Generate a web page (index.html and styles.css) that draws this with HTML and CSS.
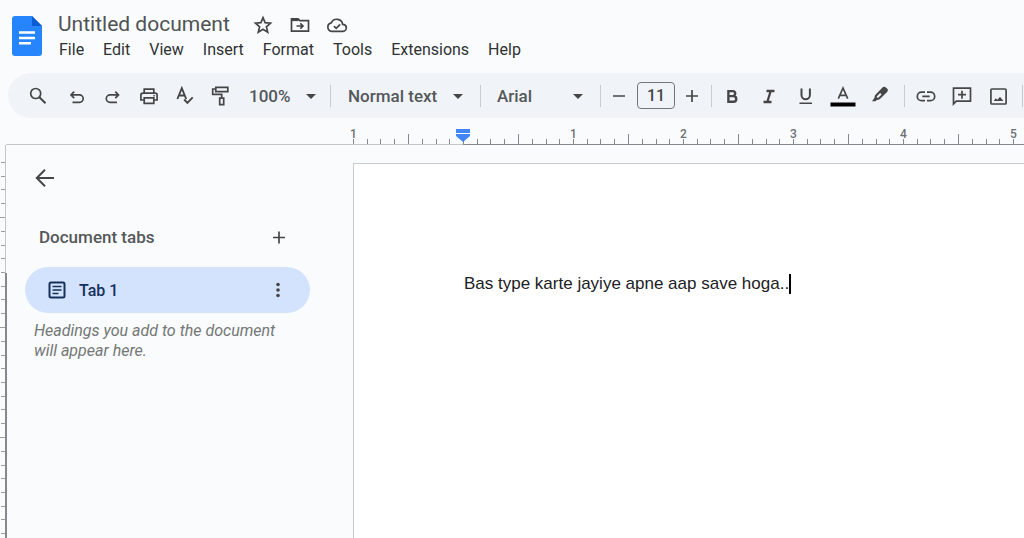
FILE: index.html
```html
<!DOCTYPE html>
<html lang="en">
<head>
<meta charset="utf-8">
<meta name="viewport" content="width=device-width, initial-scale=1">
<title>Untitled document</title>
<link rel="stylesheet" href="styles.css">
</head>
<body>
<header class="header">
  <a class="logo" href="#" aria-label="Docs home">
    <svg width="30" height="40" viewBox="0 0 30 40"><path fill="#2684fc" d="M3 0h17l10 10v27a3 3 0 0 1-3 3H3a3 3 0 0 1-3-3V3a3 3 0 0 1 3-3z"/><path fill="#0b5bd3" d="M20 0l10 10H20z"/><path stroke="#fff" stroke-width="2.400" d="M7 16.500h16M7 22h16M7 27.300h12"/></svg>
  </a>
  <div class="heading">
    <div class="title-row">
      <h1 class="title">Untitled document</h1>
      <div class="title-actions">
        <button class="icon-btn small" aria-label="Star"><svg width="20" height="20" viewBox="0 0 20 20" class="line"><path d="M10 2.700l2.100 5 5.400.5-4.100 3.600 1.300 5.300L10 14.200l-4.700 2.900 1.300-5.300-4.100-3.600 5.400-.5z"/></svg></button>
        <button class="icon-btn small" aria-label="Move"><svg width="20" height="20" viewBox="0 0 20 20" class="line"><path d="M1.500 4v12.200h17V5.700H9.800L8 3.800H1.500z"/><path d="M1.500 4.900h7" stroke-width="2.400"/><path d="M6.500 11h6M10.300 8.300l2.700 2.700-2.700 2.700"/></svg></button>
        <button class="icon-btn small" aria-label="Document status"><svg width="22" height="20" viewBox="0 0 22 20" class="line"><path d="M5.800 16.300a4.300 4.300 0 0 1-.5-8.500A6 6 0 0 1 16.700 9.300a3.500 3.500 0 0 1 .3 7z"/><path d="M7.900 11.200l2.300 2.200 4-4"/></svg></button>
      </div>
    </div>
    <nav class="menu" aria-label="Main menu">
      <button>File</button><button>Edit</button><button>View</button><button>Insert</button><button>Format</button><button>Tools</button><button>Extensions</button><button>Help</button>
    </nav>
  </div>
</header>

<div class="toolbar" role="toolbar" aria-label="Formatting">
  <div class="group search-group">
    <button class="icon-btn" aria-label="Search menus"><svg width="20" height="20" viewBox="0 0 20 20" class="line"><circle cx="7.700" cy="7.500" r="5"/><path stroke-width="2" d="M11.400 11.200l6.100 6.100"/></svg></button>
  </div>
  <div class="group">
    <button class="icon-btn" aria-label="Undo"><svg width="20" height="20" viewBox="0 0 20 20" class="line"><path d="M7.200 5.700L4 8.900l3.200 3.200M4 8.900h8.500a3.700 3.700 0 0 1 0 7.400H5.500"/></svg></button>
    <button class="icon-btn" aria-label="Redo"><svg width="20" height="20" viewBox="0 0 20 20" class="line"><path d="M12.300 5.700l3.200 3.200-3.200 3.200M15.500 8.900H7a3.700 3.700 0 0 0 0 7.400h7"/></svg></button>
    <button class="icon-btn" aria-label="Print"><svg width="20" height="20" viewBox="0 0 20 20" class="line"><path d="M5.200 7V3.200h9.600V7M5 14H1.900V9.200a2 2 0 0 1 2-2h12.200a2 2 0 0 1 2 2V14H15M5.200 11.800h9.600v5.500H5.200z"/><path stroke-width="1.500" d="M14.300 9.700h1.500"/></svg></button>
    <button class="icon-btn" aria-label="Spelling and grammar check"><svg width="20" height="20" viewBox="0 0 20 20" class="line"><path stroke-width="1.900" d="M2.400 13L6.800 2.200 11.200 13M3.900 9.500h5.800M9.200 13.500l3.200 3.300 5.300-5.500"/></svg></button>
    <button class="icon-btn" aria-label="Paint format"><svg width="20" height="20" viewBox="0 0 20 20" class="line"><path d="M4.800 1.400h12v4.200h-12zM4.800 3H1.700v5.300h9v3.300M8.700 12.200h4v6.500h-4z"/></svg></button>
  </div>
  <span class="select-wrap zoom"><select aria-label="Zoom"><option>100%</option></select></span>
  <span class="sep"></span>
  <span class="select-wrap style"><select aria-label="Styles"><option>Normal text</option></select></span>
  <span class="sep"></span>
  <span class="select-wrap font"><select aria-label="Font"><option>Arial</option></select></span>
  <span class="sep"></span>
  <div class="group">
    <button class="icon-btn" aria-label="Decrease font size"><svg width="20" height="20" viewBox="0 0 20 20" class="line"><path d="M4 10h12"/></svg></button>
    <input class="size" aria-label="Font size" value="11">
    <button class="icon-btn" aria-label="Increase font size"><svg width="20" height="20" viewBox="0 0 20 20" class="line"><path d="M3 10h12M9 4v12"/></svg></button>
  </div>
  <span class="sep"></span>
  <div class="group format-group">
    <button class="icon-btn wide" aria-label="Bold"><svg width="20" height="20" viewBox="0 0 20 20" class="line"><path stroke-width="2.400" d="M6.400 5.100h4.300a2.500 2.500 0 0 1 0 5H6.400zM6.400 10.100h5a2.800 2.800 0 0 1 0 5.700h-5z"/></svg></button>
    <button class="icon-btn wide" aria-label="Italic"><svg width="20" height="20" viewBox="0 0 20 20" class="line"><path stroke-width="2.300" d="M7.500 5h8M4.500 16h8M11.700 5L8.300 16"/></svg></button>
    <button class="icon-btn wide" aria-label="Underline"><svg width="20" height="20" viewBox="0 0 20 20" class="line"><path stroke-width="2" d="M5.500 2.600V9a4.200 4.200 0 0 0 8.400 0V2.600"/><path stroke-width="1.500" d="M3.500 17.300h12.500"/></svg></button>
    <button class="icon-btn wide" aria-label="Text color"><svg width="26" height="24" viewBox="0 0 26 24" class="line"><path d="M8.300 14.700L13 4l4.700 10.700M9.800 11.300h6.400"/><path stroke="#000" stroke-width="4" d="M.5 20.500h25"/></svg></button>
    <button class="icon-btn wide" aria-label="Highlight color"><svg width="20" height="22" viewBox="0 0 20 22"><path fill="#444746" fill-rule="evenodd" d="M2 16.200l2.700-3.600c-.4-1.300.1-2.300 1-3.200l6.800-6.900c1-1 2.300-1 3.300-.1l1.300 1.200c1 1 1 2.300 0 3.300l-6.900 6.900c-.9.900-2 1.300-3.200 1l-1.500 1.400zM7.400 10.800c-.8.800-.8 1.100-.3 1.600s1 .6 1.700-.1l2.800-2.800-1.500-1.500z"/></svg></button>
  </div>
  <span class="sep"></span>
  <div class="group insert-group">
    <button class="icon-btn" aria-label="Insert link"><svg width="20" height="20" viewBox="0 0 20 20" class="line"><path d="M9 6.200H5.500a4.200 4.200 0 0 0 0 8.400H9M11 6.200h3.500a4.200 4.200 0 0 1 0 8.400H11M6.300 10.400h7.400"/></svg></button>
    <button class="icon-btn" aria-label="Add comment"><svg width="20" height="20" viewBox="0 0 20 20" class="line"><path d="M1.500 18V2.200h17v13H4.300zM6 8.700h8M10 4.700v8"/></svg></button>
    <button class="icon-btn" aria-label="Insert image"><svg width="20" height="20" viewBox="0 0 20 20" class="line"><rect x="2.900" y="3" width="15.200" height="15" rx="1"/><path fill="#444746" stroke="none" d="M5.700 15l2-2.800 1.700 1.600 2.600-3 3.400 4.200z"/></svg></button>
  </div>
  <span class="sep"></span>
</div>

<div class="ruler" aria-hidden="true">
  <div class="ruler-margin">
    <svg class="ticks" width="100%" height="10"><defs><pattern id="inch" width="110" height="10" patternUnits="userSpaceOnUse"><path fill="#85898d" d="M0 5h1v5H0zM14 5h1v5h-1zM27 5h1v5h-1zM41 5h1v5h-1zM55 0h1v10h-1zM69 5h1v5h-1zM83 5h1v5h-1zM96 5h1v5h-1z"/></pattern></defs><rect width="110" height="10" fill="url(#inch)"/></svg>
    <span class="mark">1</span>
  </div>
  <div class="ruler-body">
    <svg class="ticks" width="100%" height="10"><rect width="100%" height="10" fill="url(#inch)"/></svg>
    <div class="marks"><span class="mark"></span><span class="mark">1</span><span class="mark">2</span><span class="mark">3</span><span class="mark">4</span><span class="mark">5</span></div>
    <svg class="indent" width="16" height="14" viewBox="0 0 16 14"><path fill="#4285f4" d="M1 0h14v4H1zM1 5h14v2l-7 6-7-6z"/></svg>
  </div>
</div>

<div class="workspace">
  <svg class="v-ruler" width="7" aria-hidden="true"><defs><pattern id="vinch" y="17" width="6" height="110" patternUnits="userSpaceOnUse"><path fill="#9a9da1" d="M1 0h5v1H1zM1 14h5v1H1zM1 27h5v1H1zM1 41h5v1H1zM0 55h6v1H0zM1 69h5v1H1zM1 83h5v1H1zM1 96h5v1H1z"/></pattern></defs><rect y="17" width="6" height="100%" fill="url(#vinch)"/><rect x="5" width="1" height="128" fill="#c4c7c5"/><rect x="5" y="128" width="2" height="100%" fill="#85888c"/></svg>
  <aside class="sidebar">
    <button class="icon-btn back" aria-label="Close tabs and outlines"><svg width="22" height="22" viewBox="0 0 22 22" class="line"><path stroke-width="2" d="M20 11H3M11 2.800L2.800 11l8.200 8.200"/></svg></button>
    <div class="tabs-head">
      <h2>Document tabs</h2>
      <button class="icon-btn small" aria-label="Add tab"><svg width="16" height="16" viewBox="0 0 16 16" class="line"><path d="M2 8.500h12M8 2.500v12"/></svg></button>
    </div>
    <div class="tab">
      <a class="tab-link" href="#"><svg width="18" height="18" viewBox="0 0 18 18" fill="none" stroke="#16305c" stroke-width="2"><rect x="1.500" y="1.500" width="15" height="15" rx="1.500"/><path stroke-width="1.600" d="M4.500 5.500h9M4.500 9h9M4.500 12.500h6"/></svg>Tab 1</a>
      <button class="icon-btn small" aria-label="Tab options"><svg width="6" height="18" viewBox="0 0 6 18" fill="#444746"><circle cx="3" cy="3.500" r="1.800"/><circle cx="3" cy="9" r="1.800"/><circle cx="3" cy="14.500" r="1.800"/></svg></button>
    </div>
    <p class="hint">Headings you add to the document will appear here.</p>
  </aside>
  <main class="page">
    <div class="editor" role="textbox" aria-label="Document content" contenteditable="true" spellcheck="false">Bas type karte jayiye apne aap save hoga..<span class="caret"></span></div>
  </main>
</div>
</body>
</html>
```
FILE: styles.css
```css
* { box-sizing: border-box; }

body {
  margin: 0;
  min-height: 100vh;
  display: flex;
  flex-direction: column;
  overflow: hidden;
  background: #f9fbfd;
  color: #444746;
  font-family: Roboto, "Open Sans", sans-serif;
  font-size: 16px;
}

button, select, input { font: inherit; color: inherit; }
button { border: 0; padding: 0; background: none; }
svg { display: block; flex: none; }

.line {
  fill: none;
  stroke: #444746;
  stroke-width: 1.7;
}

.icon-btn {
  display: flex;
  align-items: center;
  justify-content: center;
  flex: none;
  width: 36px;
  height: 36px;
}
.icon-btn.wide { width: 37px; }
.icon-btn.small { width: 24px; height: 24px; }

/* Header */
.header {
  display: flex;
  gap: 16px;
  padding: 10px 12px 11px;
}
.logo { padding-top: 6px; }
.title-row { display: flex; align-items: center; gap: 21px; height: 28px; }
.title { margin: 0; color: #505354; font-size: 21px; font-weight: 400; line-height: 28px; }
.title-actions { display: flex; gap: 13px; padding-top: 2px; }
.menu { display: flex; gap: 19px; padding-left: 1px; }
.menu button { line-height: 24px; color: #303232; }

/* Toolbar */
.toolbar {
  display: flex;
  align-items: center;
  height: 45px;
  margin-left: 8px;
  padding-left: 12px;
  overflow: hidden;
  border-radius: 23px 0 0 23px;
  background: #f0f4f9;
}
.group { display: flex; align-items: center; flex: none; }
.search-group { padding-right: 3px; }
.format-group { padding: 0 6px 0 1px; }
.insert-group { padding: 0 6px 0 3px; }
.sep { flex: none; width: 1px; height: 22px; background: #c7cacf; }

.select-wrap { position: relative; flex: none; }
.select-wrap select {
  appearance: none;
  width: 100%;
  height: 32px;
  border: 0;
  background: none;
  color: #55585a;
  font-size: 17px;
  font-weight: 500;
}
.select-wrap::after {
  content: "";
  position: absolute;
  top: 14px;
  right: 17px;
  border: 5px solid transparent;
  border-top-color: #444746;
  border-bottom: 0;
  pointer-events: none;
}
.zoom { width: 91px; }
.zoom::after { right: 14px; }
.zoom select { padding-left: 10px; }
.style { width: 149px; }
.style select { padding-left: 17px; }
.font { width: 119px; }
.font select { padding-left: 16px; }

.size {
  width: 38px;
  height: 27px;
  padding: 0;
  border: 1px solid #747775;
  border-radius: 4px;
  background: none;
  text-align: center;
  font-weight: 500;
}

/* Rulers */
.ruler {
  display: flex;
  height: 27px;
  margin-left: 6px;
}
.ruler-margin, .ruler-body {
  position: relative;
  display: flex;
  border-bottom: 1px solid #85888c;
}
.ruler-margin {
  flex: none;
  width: 457px;
  padding-left: 347px;
  border-color: #c4c7c5;
}
.ruler-body { flex: 1; min-width: 0; }
.marks { display: flex; flex: 1; min-width: 0; overflow: hidden; }
.ticks { position: absolute; bottom: 0; left: 0; }
.ruler-margin .ticks { left: 347px; }
.mark {
  flex: none;
  width: 110px;
  padding-top: 8px;
  font-size: 12px;
  font-weight: 500;
  line-height: 16px;
  color: #6b6f74;
  text-indent: -3px;
}
.mark:last-child { width: auto; }
.ruler-margin .mark { width: 110px; }
.indent { position: absolute; left: -8px; bottom: 1px; }

/* Workspace */
.workspace { display: flex; flex: 1; }
.v-ruler { align-self: stretch; height: auto; }
.sidebar {
  flex: none;
  width: 346px;
  padding: 15px 43px 0 18px;
}
.back { margin-left: 2px; }
.tabs-head {
  display: flex;
  align-items: center;
  justify-content: space-between;
  padding: 29px 19px 18px 14px;
}
.tabs-head h2 { margin: 0; color: #55585a; font-size: 17px; font-weight: 500; line-height: 24px; }
.tab {
  display: flex;
  align-items: center;
  height: 46px;
  padding: 0 20px 0 23px;
  border-radius: 23px;
  background: #d3e3fd;
}
.tab-link {
  display: flex;
  align-items: center;
  flex: 1;
  gap: 13px;
  color: #16305c;
  font-weight: 500;
  text-decoration: none;
}
.hint {
  margin: 8px 32px 0 9px;
  color: #747775;
  font-size: 16px;
  font-style: italic;
  line-height: 20px;
}
.page {
  flex: 1;
  margin-top: 18px;
  padding: 110px 0 0 110px;
  border: 1px solid #c7cacf;
  border-width: 1px 0 0 1px;
  background: #fff;
}
.editor {
  color: #202124;
  font: 17px/20px "Liberation Sans", Arial, sans-serif;
  outline: 0;
}
.caret {
  display: inline-block;
  width: 2px;
  height: 20px;
  background: #000;
  vertical-align: top;
}
```
